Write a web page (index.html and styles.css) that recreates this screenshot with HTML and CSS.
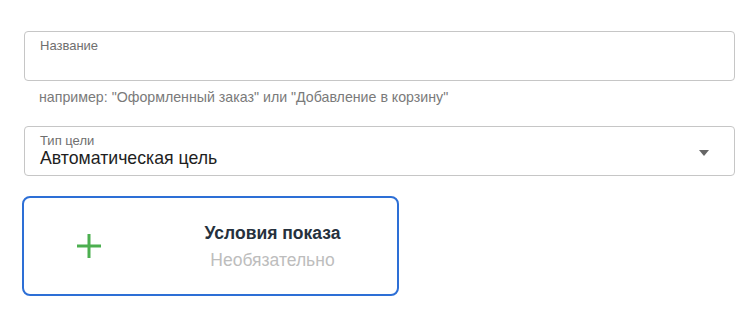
FILE: index.html
```html
<!DOCTYPE html>
<html lang="ru">
<head>
<meta charset="utf-8">
<link rel="stylesheet" href="styles.css">
</head>
<body>
<div class="form">
  <div class="field">
    <div class="box">
      <span class="label">Название</span>
    </div>
    <div class="hint">например: "Оформленный заказ" или "Добавление в корзину"</div>
  </div>
  <div class="field">
    <div class="box select">
      <div class="select-text">
        <span class="label">Тип цели</span>
        <span class="value">Автоматическая цель</span>
      </div>
      <span class="arrow"></span>
    </div>
  </div>
  <div class="card">
    <div class="card-icon">
      <svg width="24" height="24" viewBox="0 0 24 24"><path d="M12 0v24M0 12h24" stroke="#4caf50" stroke-width="3" fill="none"/></svg>
    </div>
    <div class="card-text">
      <div class="card-title">Условия показа</div>
      <div class="card-sub">Необязательно</div>
    </div>
  </div>
</div>
</body>
</html>
```
FILE: styles.css
```css
* { box-sizing: border-box; }
html, body { margin: 0; background: #fff; }
body { font-family: "Liberation Sans", Arial, sans-serif; }
.form {
  padding: 31px 16px 0 24px;
  display: flex;
  flex-direction: column;
}
.field { display: flex; flex-direction: column; }
.box {
  width: 711px;
  height: 50px;
  border: 1px solid #c6c6c6;
  border-radius: 4px;
  padding: 6px 15px 0;
}
.label {
  display: block;
  font-size: 13px;
  line-height: 15px;
  color: #6f6f6f;
}
.hint {
  font-size: 14.2px;
  line-height: 16px;
  color: #7a7a7a;
  padding: 8px 0 0 15px;
  margin-bottom: 21px;
}
.select {
  display: flex;
  align-items: center;
  justify-content: space-between;
  padding: 6px 25px 0 15px;
}
.select-text { align-self: flex-start; }
.value {
  display: block;
  font-size: 17.7px;
  line-height: 20px;
  color: #1e1e1e;
  margin-top: 0;
}
.arrow {
  width: 0; height: 0;
  border-left: 5px solid transparent;
  border-right: 5px solid transparent;
  border-top: 6px solid #666;
  margin-top: -2px;
}
.card {
  margin-top: 20px;
  margin-left: -2px;
  width: 377px;
  height: 100px;
  border: 2px solid #2d6fd6;
  border-radius: 8px;
  display: grid;
  grid-template-columns: 124px 1fr;
  align-items: center;
}
.card-icon { display: flex; justify-content: center; padding-left: 6px; }
.card-icon svg { display: block; }
.card-text { text-align: center; padding-top: 1px; }
.card-title {
  font-size: 17.5px;
  font-weight: bold;
  line-height: 20px;
  color: #26313d;
}
.card-sub {
  font-size: 17.5px;
  line-height: 20px;
  color: #bdbdbd;
  margin-top: 7px;
}
```
